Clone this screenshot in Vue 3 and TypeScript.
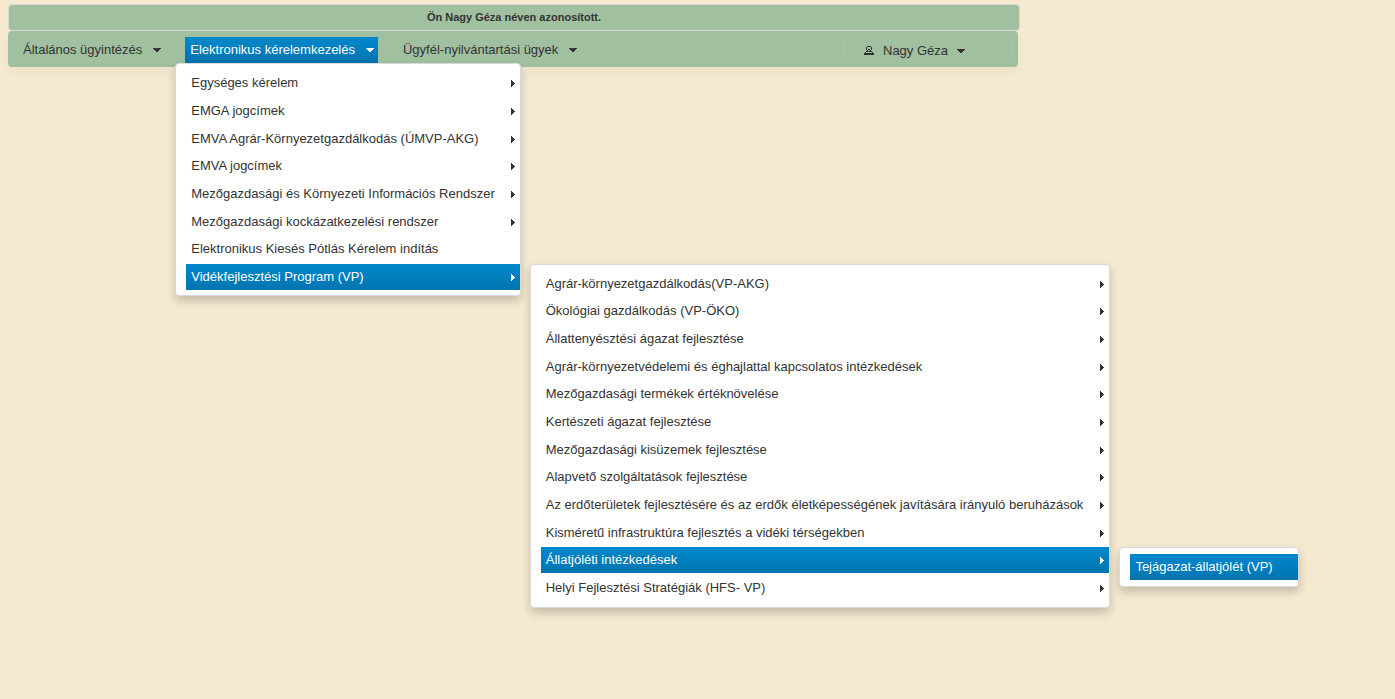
<script setup lang="ts">
interface Entry {
  label: string
  active?: boolean
  children?: Entry[]
}

const group = (label: string): Entry => ({ label, children: [] })

const welfare: Entry[] = [{ label: 'Tejágazat-állatjólét (VP)', active: true }]

const ruralProgram: Entry[] = [
  group('Agrár-környezetgazdálkodás(VP-AKG)'),
  group('Ökológiai gazdálkodás (VP-ÖKO)'),
  group('Állattenyésztési ágazat fejlesztése'),
  group('Agrár-környezetvédelemi és éghajlattal kapcsolatos intézkedések'),
  group('Mezőgazdasági termékek értéknövelése'),
  group('Kertészeti ágazat fejlesztése'),
  group('Mezőgazdasági kisüzemek fejlesztése'),
  group('Alapvető szolgáltatások fejlesztése'),
  group('Az erdőterületek fejlesztésére és az erdők életképességének javítására irányuló beruházások'),
  group('Kisméretű infrastruktúra fejlesztés a vidéki térségekben'),
  { label: 'Állatjóléti intézkedések', active: true, children: welfare },
  group('Helyi Fejlesztési Stratégiák (HFS- VP)'),
]

const requests: Entry[] = [
  group('Egységes kérelem'),
  group('EMGA jogcímek'),
  group('EMVA Agrár-Környezetgazdálkodás (ÚMVP-AKG)'),
  group('EMVA jogcímek'),
  group('Mezőgazdasági és Környezeti Információs Rendszer'),
  group('Mezőgazdasági kockázatkezelési rendszer'),
  { label: 'Elektronikus Kiesés Pótlás Kérelem indítás' },
  { label: 'Vidékfejlesztési Program (VP)', active: true, children: ruralProgram },
]

const bar: Entry[] = [
  group('Általános ügyintézés'),
  { label: 'Elektronikus kérelemkezelés', active: true, children: requests },
  group('Ügyfél-nyilvántartási ügyek'),
]
</script>

<template>
  <div class="page">
    <header class="notice">Ön Nagy Géza néven azonosított.</header>
    <nav class="menubar">
      <ul class="bar">
        <li v-for="top in bar" :key="top.label" class="bar-item">
          <a href="#" class="bar-link" :class="{ active: top.active }">
            {{ top.label }}
            <svg class="caret" viewBox="0 0 8 5"><path d="M0 1h8v1H7v1H6v1H5v1H3V4H2V3H1V2H0z" /></svg>
          </a>
          <ul v-if="top.active" class="menu menu-first">
            <li v-for="item in top.children" :key="item.label" class="item">
              <a href="#" class="link" :class="{ active: item.active }">
                {{ item.label }}
                <svg v-if="item.children" class="arrow" viewBox="0 0 4 7"><path d="M0 0h1v1h1v1h1v1h1v1H3v1H2v1H1v1H0z" /></svg>
              </a>
              <ul v-if="item.active && item.children" class="menu menu-second">
                <li v-for="sub in item.children" :key="sub.label" class="item">
                  <a href="#" class="link" :class="{ active: sub.active }">
                    {{ sub.label }}
                    <svg v-if="sub.children" class="arrow" viewBox="0 0 4 7"><path d="M0 0h1v1h1v1h1v1h1v1H3v1H2v1H1v1H0z" /></svg>
                  </a>
                  <ul v-if="sub.active && sub.children" class="menu">
                    <li v-for="leaf in sub.children" :key="leaf.label" class="item">
                      <a href="#" class="link" :class="{ active: leaf.active }">{{ leaf.label }}</a>
                    </li>
                  </ul>
                </li>
              </ul>
            </li>
          </ul>
        </li>
      </ul>
      <button type="button" class="user">
        <svg class="person" viewBox="0 0 10 9">
          <path d="M3 0h4v1H3zM2 1h1v3H2zM7 1h1v3H7zM3 4h1v1H3zM6 4h1v1H6zM4 3h2v1H4zM2 5h6v1H2zM1 6h1v1H1zM8 6h1v1H8zM0 7h10v2H0z" />
        </svg>
        Nagy Géza
        <svg class="caret" viewBox="0 0 8 5"><path d="M0 1h8v1H7v1H6v1H5v1H3V4H2V3H1V2H0z" /></svg>
      </button>
    </nav>
  </div>
</template>

<style>
body {
  margin: 0;
  background: #f5ead0;
}
</style>

<style scoped>
.page {
  box-sizing: border-box;
  max-width: 1028px;
  min-height: 100vh;
  padding: 4px 8px 0;
  font-family: "Liberation Sans", Arial, sans-serif;
  font-size: 13px;
  color: #333;
}

.notice {
  box-sizing: border-box;
  height: 27px;
  border: 1px solid #d9d9d9;
  border-radius: 4px;
  background: #a1c0a0;
  font-size: 11px;
  font-weight: bold;
  line-height: 25px;
  text-align: center;
}

.menubar {
  display: flex;
  justify-content: space-between;
  box-sizing: border-box;
  height: 36px;
  margin-right: 2px;
  padding: 6px 9px 4px 10px;
  border-radius: 4px;
  background: #a1c0a0;
  box-shadow: 0 5px 10px rgba(0, 0, 0, 0.04);
}

ul {
  margin: 0;
  padding: 0;
  list-style: none;
}

.bar {
  display: flex;
  gap: 20px;
}

.bar-item {
  position: relative;
}

.bar-link {
  display: flex;
  align-items: center;
  gap: 11px;
  box-sizing: border-box;
  height: 26px;
  padding: 0 4px 1px 5px;
  color: inherit;
  text-decoration: none;
  white-space: nowrap;
}

.bar-link.active,
.link.active {
  background: linear-gradient(#0088cc, #0074b0);
  color: #fff;
}

.caret {
  width: 8px;
  height: 5px;
  fill: currentColor;
}

.menu {
  position: absolute;
  top: 0;
  left: calc(100% + 10px);
  z-index: 1;
  padding: 6px 0 4px 10px;
  border: 1px solid #d9d9d9;
  border-radius: 4px;
  background: #fff;
  box-shadow: 0 5px 10px rgba(0, 0, 0, 0.2);
}

.menu-first {
  top: 100%;
  left: -10px;
  padding-bottom: 3px;
}

.item {
  position: relative;
  height: 28px;
}

.menu-first > .item:nth-child(3n),
.menu-second > .item:nth-child(3n + 1) {
  height: 27px;
}

.link {
  display: block;
  height: 26px;
  padding: 0 25px 0 5px;
  color: inherit;
  line-height: 26px;
  text-decoration: none;
  white-space: nowrap;
}

.menu-second > .item > .link {
  padding-right: 26px;
}

.arrow {
  position: absolute;
  top: 10px;
  right: 5px;
  width: 4px;
  height: 7px;
  fill: currentColor;
}

.user {
  display: flex;
  align-items: center;
  gap: 9px;
  width: 162px;
  height: 26px;
  padding: 0 16px;
  border: 1px solid #9dbc9c;
  border-radius: 4px;
  background: transparent;
  color: inherit;
  font: inherit;
}

.person {
  width: 10px;
  height: 9px;
  fill: currentColor;
}
</style>
